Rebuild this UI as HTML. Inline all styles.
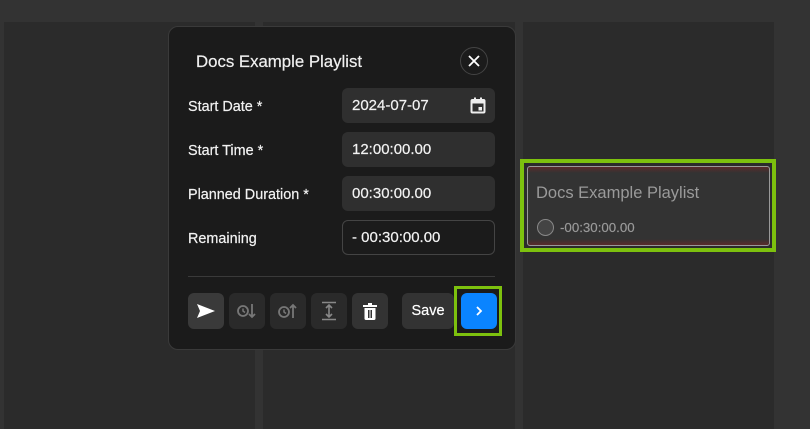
<!DOCTYPE html><html><head><style>
body{margin:0;width:810px;height:429px;background:#333;position:relative;overflow:hidden;font-family:"Liberation Sans",sans-serif;color:#eee}
.col{position:absolute;top:22px;height:407px;background:#2b2b2b}
.dlg{position:absolute;left:168px;top:26px;width:348px;height:324px;background:#1b1b1b;border:1px solid #3a3a3a;border-radius:10px;box-sizing:border-box}
.a{position:absolute}
.lbl{position:absolute;left:188px;font-size:14.4px;color:#f2f2f2;-webkit-text-stroke:0.2px #f2f2f2}
.inp{position:absolute;left:342px;width:153px;height:35px;background:#2f2f2f;border-radius:6px;box-sizing:border-box;padding-left:10px;line-height:35px;font-size:15px;color:#f2f2f2;-webkit-text-stroke:0.2px #f2f2f2}
.btn{position:absolute;top:293px;width:36px;height:36px;background:#333;border-radius:6px;display:flex;align-items:center;justify-content:center}
</style></head><body>
<div class="col" style="left:4px;width:251px"></div>
<div class="col" style="left:263px;width:252px"></div>
<div class="col" style="left:523px;width:251px"></div>
<div class="dlg"></div>
<div class="a" style="left:196px;top:52px;font-size:16.8px;color:#f0f0f0;-webkit-text-stroke:0.2px #f0f0f0">Docs Example Playlist</div>
<div class="a" style="left:460px;top:47px;width:28px;height:28px;border:1px solid #444;border-radius:50%;box-sizing:border-box;display:flex;align-items:center;justify-content:center"><svg width="12" height="12" viewBox="0 0 12 12"><path d="M1 1L11 11M11 1L1 11" stroke="#fff" stroke-width="1.8"/></svg></div>
<div class="lbl" style="top:99px">Start Date *</div>
<div class="lbl" style="top:143px">Start Time *</div>
<div class="lbl" style="top:187px">Planned Duration *</div>
<div class="lbl" style="top:231px">Remaining</div>
<div class="inp" style="top:88px">2024-07-07<svg class="a" style="left:128px;top:9px" width="16" height="17" viewBox="0 0 16 17"><rect x="1.5" y="3" width="13" height="12.5" rx="1" fill="none" stroke="#eee" stroke-width="2"/><rect x="1.5" y="3" width="13" height="3.5" fill="#eee"/><rect x="4" y="0.5" width="2" height="3" fill="#eee"/><rect x="10" y="0.5" width="2" height="3" fill="#eee"/><rect x="8.5" y="10" width="3.5" height="3.5" fill="#eee"/></svg></div>
<div class="inp" style="top:132px">12:00:00.00</div>
<div class="inp" style="top:176px">00:30:00.00</div>
<div class="inp" style="top:220px;background:#1b1b1b;border:1px solid #444;line-height:33px;padding-left:9px">- 00:30:00.00</div>
<div class="a" style="left:188px;top:276px;width:307px;height:1px;background:#3a3a3a"></div>
<div class="btn" style="left:188px;background:#3a3a3a"><svg width="20" height="16" viewBox="0 0 20 16"><path d="M1 1L19 8L1 15L4 8Z" fill="#fff"/></svg></div>
<div class="btn" style="left:229px;background:#2a2a2a"><svg width="22" height="18" viewBox="0 0 22 18"><circle cx="7" cy="9" r="5" fill="none" stroke="#777" stroke-width="1.8"/><path d="M7 6.5V9L9 10.5" stroke="#777" stroke-width="1.5" fill="none"/><path d="M16 2V15M13 12L16 15L19 12" stroke="#777" stroke-width="1.8" fill="none"/></svg></div>
<div class="btn" style="left:270px;background:#2a2a2a"><svg width="22" height="18" viewBox="0 0 22 18"><circle cx="7" cy="10" r="5" fill="none" stroke="#777" stroke-width="1.8"/><path d="M7 7.5V10L9 11.5" stroke="#777" stroke-width="1.5" fill="none"/><path d="M16 16V3M13 6L16 3L19 6" stroke="#777" stroke-width="1.8" fill="none"/></svg></div>
<div class="btn" style="left:311px;background:#2a2a2a"><svg width="16" height="20" viewBox="0 0 16 20"><path d="M1 1.5H15M1 18.5H15M8 4V16M5 7L8 4L11 7M5 13L8 16L11 13" stroke="#888" stroke-width="1.6" fill="none"/></svg></div>
<div class="btn" style="left:352px;background:#333"><svg width="14" height="17" viewBox="0 0 14 17"><rect x="0" y="2" width="14" height="2" fill="#fff"/><rect x="5" y="0" width="4" height="2" fill="#fff"/><path d="M1.5 5H12.5V15.5Q12.5 17 11 17H3Q1.5 17 1.5 15.5Z" fill="#fff"/><rect x="5" y="7" width="1.5" height="8" fill="#333"/><rect x="7.5" y="7" width="1.5" height="8" fill="#333"/></svg></div>
<div class="btn" style="left:402px;width:52px;font-size:14.5px;color:#fff;-webkit-text-stroke:0.2px #fff">Save</div>
<div class="a" style="left:454px;top:286px;width:48px;height:50px;border:3px solid #7dc10e;box-sizing:border-box"></div>
<div class="btn" style="left:461px;background:#0a84ff"><svg width="8" height="12" viewBox="0 0 8 12"><path d="M2 2L6 6L2 10" stroke="#fff" stroke-width="1.8" fill="none"/></svg></div>
<div class="a" style="left:520px;top:159px;width:256px;height:93px;border:4px solid #7dc10e;box-sizing:border-box"></div>
<div class="a" style="left:527px;top:166px;width:243px;height:80px;border:1px solid #999;border-radius:3px;box-sizing:border-box;background:linear-gradient(#5a2a2a,#333 6px,#333 72px,#5a2a2a)"></div>
<div class="a" style="left:536px;top:184px;font-size:16.5px;color:#9a9a9a">Docs Example Playlist</div>
<div class="a" style="left:537px;top:219px;width:17px;height:17px;border:1.5px solid #888;border-radius:50%;box-sizing:border-box;background:#444"></div>
<div class="a" style="left:560px;top:220px;font-size:13.3px;color:#9a9a9a;-webkit-text-stroke:0.15px #9a9a9a">-00:30:00.00</div>
</body></html>
